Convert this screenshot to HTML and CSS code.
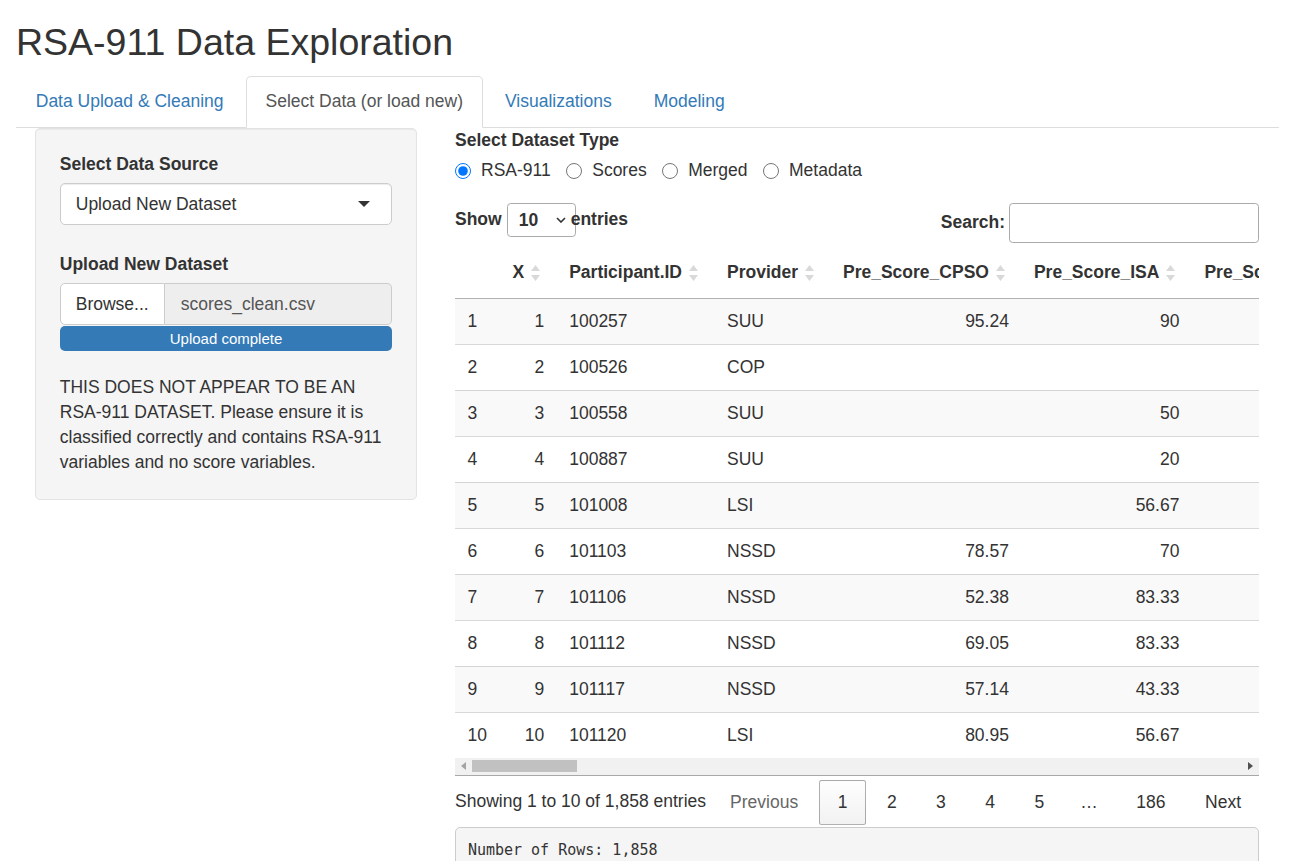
FILE: index.html
```html
<!DOCTYPE html>
<html lang="en">
<head>
<meta charset="utf-8">
<title>RSA-911 Data Exploration</title>
<link rel="stylesheet" href="styles.css">
</head>
<body>
<div class="page">
  <h2 class="title">RSA-911 Data Exploration</h2>
  <ul class="tabs">
    <li class="tab"><a>Data Upload &amp; Cleaning</a></li>
    <li class="tab active"><a>Select Data (or load new)</a></li>
    <li class="tab"><a>Visualizations</a></li>
    <li class="tab"><a>Modeling</a></li>
  </ul>
  <div class="tab-content">
    <aside class="well">
      <div class="group group-select">
        <label class="label">Select Data Source</label>
        <div class="selectize"><span>Upload New Dataset</span><span class="caret"></span></div>
      </div>
      <div class="group">
        <label class="label">Upload New Dataset</label>
        <div class="file">
          <span class="browse">Browse...</span>
          <span class="filename">scores_clean.csv</span>
        </div>
        <div class="progress">Upload complete</div>
      </div>
      <p class="note">THIS DOES NOT APPEAR TO BE AN RSA-911 DATASET. Please ensure it is classified correctly and contains RSA-911 variables and no score variables.</p>
    </aside>
    <main class="main">
      <label class="label">Select Dataset Type</label>
      <div class="radios">
        <label class="radio"><input type="radio" name="dtype" checked><span>RSA-911</span></label>
        <label class="radio"><input type="radio" name="dtype"><span>Scores</span></label>
        <label class="radio"><input type="radio" name="dtype"><span>Merged</span></label>
        <label class="radio"><input type="radio" name="dtype"><span>Metadata</span></label>
      </div>
      <div class="dt-top">
        <div class="length">
          <span>Show</span>
          <span class="len-wrap">
            <select class="len-select"><option>10</option><option>25</option><option>50</option><option>100</option></select>
            <svg class="chev" width="10" height="6" viewBox="0 0 10 6"><path d="M1 1 L5 5 L9 1" fill="none" stroke="#333" stroke-width="1.6"/></svg>
          </span>
          <span>entries</span>
        </div>
        <label class="filter">Search:<input type="search"></label>
      </div>
      <div class="dt-scroll">
        <table class="dt">
          <thead>
            <tr>
              <th class="plain"></th>
              <th class="num">X<span class="sort"><svg width="9" height="16" viewBox="0 0 9 16"><path d="M4.5 0 L9 6 H0 Z M0 10 H9 L4.5 16 Z" fill="#d9d9d9"/></svg></span></th>
              <th>Participant.ID<span class="sort"><svg width="9" height="16" viewBox="0 0 9 16"><path d="M4.5 0 L9 6 H0 Z M0 10 H9 L4.5 16 Z" fill="#d9d9d9"/></svg></span></th>
              <th>Provider<span class="sort"><svg width="9" height="16" viewBox="0 0 9 16"><path d="M4.5 0 L9 6 H0 Z M0 10 H9 L4.5 16 Z" fill="#d9d9d9"/></svg></span></th>
              <th class="num">Pre_Score_CPSO<span class="sort"><svg width="9" height="16" viewBox="0 0 9 16"><path d="M4.5 0 L9 6 H0 Z M0 10 H9 L4.5 16 Z" fill="#d9d9d9"/></svg></span></th>
              <th class="num">Pre_Score_ISA<span class="sort"><svg width="9" height="16" viewBox="0 0 9 16"><path d="M4.5 0 L9 6 H0 Z M0 10 H9 L4.5 16 Z" fill="#d9d9d9"/></svg></span></th>
              <th class="clip">Pre_Sc</th>
            </tr>
          </thead>
          <tbody>
            <tr><td>1</td><td class="num">1</td><td>100257</td><td>SUU</td><td class="num">95.24</td><td class="num">90</td><td></td></tr>
            <tr><td>2</td><td class="num">2</td><td>100526</td><td>COP</td><td class="num"></td><td class="num"></td><td></td></tr>
            <tr><td>3</td><td class="num">3</td><td>100558</td><td>SUU</td><td class="num"></td><td class="num">50</td><td></td></tr>
            <tr><td>4</td><td class="num">4</td><td>100887</td><td>SUU</td><td class="num"></td><td class="num">20</td><td></td></tr>
            <tr><td>5</td><td class="num">5</td><td>101008</td><td>LSI</td><td class="num"></td><td class="num">56.67</td><td></td></tr>
            <tr><td>6</td><td class="num">6</td><td>101103</td><td>NSSD</td><td class="num">78.57</td><td class="num">70</td><td></td></tr>
            <tr><td>7</td><td class="num">7</td><td>101106</td><td>NSSD</td><td class="num">52.38</td><td class="num">83.33</td><td></td></tr>
            <tr><td>8</td><td class="num">8</td><td>101112</td><td>NSSD</td><td class="num">69.05</td><td class="num">83.33</td><td></td></tr>
            <tr><td>9</td><td class="num">9</td><td>101117</td><td>NSSD</td><td class="num">57.14</td><td class="num">43.33</td><td></td></tr>
            <tr><td>10</td><td class="num">10</td><td>101120</td><td>LSI</td><td class="num">80.95</td><td class="num">56.67</td><td></td></tr>
          </tbody>
        </table>
      </div>
      <div class="hscroll">
        <span class="sb-btn"><svg width="5" height="8" viewBox="0 0 5 8"><path d="M5 0 V8 L0 4 Z" fill="#a3a3a3"/></svg></span>
        <span class="sb-thumb"></span>
        <span class="sb-track"></span>
        <span class="sb-btn"><svg width="5" height="8" viewBox="0 0 5 8"><path d="M0 0 V8 L5 4 Z" fill="#505050"/></svg></span>
      </div>
      <div class="dt-bottom">
        <div class="info">Showing 1 to 10 of 1,858 entries</div>
        <div class="paginate">
          <a class="pbtn disabled">Previous</a>
          <a class="pbtn current">1</a>
          <a class="pbtn">2</a>
          <a class="pbtn">3</a>
          <a class="pbtn">4</a>
          <a class="pbtn">5</a>
          <span class="ellipsis">…</span>
          <a class="pbtn">186</a>
          <a class="pbtn">Next</a>
        </div>
      </div>
      <pre class="verbatim">Number of Rows: 1,858</pre>
    </main>
  </div>
</div>
</body>
</html>
```
FILE: styles.css
```css
html, body {
  margin: 0;
  padding: 0;
  background: #fff;
}
body {
  font-family: "Liberation Sans", Arial, Helvetica, sans-serif;
  font-size: 17.5px;
  line-height: 25px;
  color: #333;
}
.page {
  padding: 0 12px 0 16px;
}
.title {
  margin: 22px 0 12.5px;
  font-size: 37.5px;
  line-height: 41.25px;
  font-weight: 400;
  color: #333;
}
.tabs {
  list-style: none;
  margin: 0;
  padding: 0;
  display: flex;
  border-bottom: 1px solid #ddd;
}
.tab {
  margin-right: 2.5px;
  margin-bottom: -1px;
}
.tab a {
  display: block;
  padding: 12.5px 18.75px;
  border: 1px solid transparent;
  border-radius: 5px 5px 0 0;
  color: #337ab7;
  line-height: 25px;
  cursor: pointer;
}
.tab.active a {
  color: #555;
  background: #fff;
  border-color: #ddd #ddd transparent;
}
.tab-content {
  display: flex;
  align-items: flex-start;
  padding-left: 19px;
  gap: 38px;
}
.well {
  flex: 0 0 382px;
  box-sizing: border-box;
  padding: 23px 23.75px 23.75px;
  background: #f5f5f5;
  border: 1px solid #e3e3e3;
  border-radius: 5px;
  box-shadow: inset 0 1px 1px rgba(0, 0, 0, 0.05);
}
.label {
  display: block;
  font-weight: 700;
  margin-bottom: 6.25px;
}
.group-select {
  margin-bottom: 27px;
}
.selectize {
  height: 42px;
  box-sizing: border-box;
  border: 1px solid #ccc;
  border-radius: 5px;
  background: #fff;
  padding: 0 21px 0 15px;
  display: flex;
  align-items: center;
  justify-content: space-between;
  box-shadow: inset 0 1px 1px rgba(0, 0, 0, 0.075);
}
.caret {
  width: 0;
  height: 0;
  border-left: 6px solid transparent;
  border-right: 6px solid transparent;
  border-top: 6px solid #333;
}
.file {
  display: flex;
  height: 42px;
}
.browse {
  flex: 0 0 104px;
  box-sizing: border-box;
  border: 1px solid #ccc;
  border-radius: 5px 0 0 5px;
  background: #fff;
  padding: 7.5px 15px;
  color: #333;
}
.filename {
  flex: 1;
  box-sizing: border-box;
  border: 1px solid #ccc;
  border-left: 0;
  border-radius: 0 5px 5px 0;
  background: #eee;
  color: #555;
  padding: 7.5px 16px;
}
.progress {
  margin-top: 1px;
  height: 25px;
  background: #337ab7;
  border-radius: 5px;
  color: #fff;
  font-size: 15px;
  line-height: 25px;
  text-align: center;
}
.note {
  margin: 24px 0 0;
}
.main {
  flex: 0 0 804px;
  width: 804px;
}
.radios {
  display: flex;
  align-items: center;
  height: 25px;
  margin-top: -1px;
  margin-bottom: 19.75px;
}
.radio {
  display: flex;
  align-items: center;
  margin-right: 15.5px;
}
.radio input {
  width: 16px;
  height: 16px;
  margin: 0 10px 0 0;
}
.dt-top {
  display: flex;
  justify-content: space-between;
  align-items: flex-start;
  margin-bottom: 5px;
}
.length {
  display: flex;
  align-items: center;
  font-weight: 700;
  height: 34px;
}
.len-wrap {
  display: inline-flex;
  align-items: center;
  margin: 0 5px;
}
.len-select {
  appearance: none;
  -webkit-appearance: none;
  width: 69px;
  height: 34px;
  box-sizing: border-box;
  border: 1px solid #aaa;
  border-radius: 3.75px;
  background: #fff;
  padding: 0 0 0 11px;
  font: 700 17.5px "Liberation Sans", Arial, sans-serif;
  color: #333;
}
.chev {
  margin-left: -20px;
  pointer-events: none;
}
.filter {
  display: flex;
  align-items: center;
  font-weight: 700;
}
.filter input {
  width: 250px;
  height: 40px;
  box-sizing: border-box;
  margin: 0 0 0 4px;
  border: 1px solid #aaa;
  border-radius: 3.75px;
  padding: 5px;
  font: 17.5px "Liberation Sans", Arial, sans-serif;
}
.dt-scroll {
  width: 804px;
  overflow: hidden;
}
.dt {
  border-collapse: separate;
  border-spacing: 0;
  white-space: nowrap;
}
.dt th {
  position: relative;
  font-weight: 700;
  text-align: left;
  padding: 12.5px 32.5px 12.5px 12.5px;
  border-bottom: 1px solid rgba(0, 0, 0, 0.3);
  line-height: 25px;
}
.dt th.num {
  text-align: right;
}
.dt th.clip {
  padding-right: 0;
}
.sort {
  position: absolute;
  right: 16.5px;
  top: 50%;
  margin-top: -8px;
  height: 16px;
  line-height: 0;
}
.dt td {
  padding: 10px 12.5px;
  border-top: 1px solid rgba(0, 0, 0, 0.15);
  line-height: 25px;
}
.dt td.num {
  text-align: right;
}
.dt tbody tr:first-child td {
  border-top: 0;
}
.dt tbody tr:nth-child(odd) td {
  background: #f9f9f9;
}
.hscroll {
  display: flex;
  align-items: center;
  height: 17px;
  background: #f1f1f1;
  border-bottom: 1px solid rgba(0, 0, 0, 0.3);
}
.sb-btn {
  flex: 0 0 17px;
  height: 17px;
  display: flex;
  align-items: center;
  justify-content: center;
}
.sb-thumb {
  flex: 0 0 105px;
  height: 12px;
  background: #c1c1c1;
}
.sb-track {
  flex: 1;
}
.dt-bottom {
  display: flex;
  justify-content: space-between;
  align-items: flex-start;
}
.info {
  padding-top: 13.2px;
}
.paginate {
  display: flex;
  align-items: flex-start;
  padding-top: 4.4px;
  margin-right: -0.5px;
}
.pbtn {
  padding: 8.75px 17.5px;
  border: 1px solid transparent;
  border-radius: 2.5px;
  margin-left: 2.5px;
  color: #333;
  line-height: 25px;
  cursor: pointer;
}
.pbtn.disabled {
  color: #666;
}
.pbtn.current {
  border-color: rgba(0, 0, 0, 0.3);
  background: linear-gradient(to bottom, rgba(230, 230, 230, 0.05) 0%, rgba(0, 0, 0, 0.05) 100%);
}
.ellipsis {
  padding: 9.75px 17.5px;
  line-height: 25px;
}
.verbatim {
  margin: 2px 0 0;
  padding: 11.875px;
  background: #f5f5f5;
  border: 1px solid #ccc;
  border-radius: 5px;
  font-family: "DejaVu Sans Mono", "Liberation Mono", monospace;
  font-size: 15px;
  line-height: 21.4px;
  color: #333;
}
```
